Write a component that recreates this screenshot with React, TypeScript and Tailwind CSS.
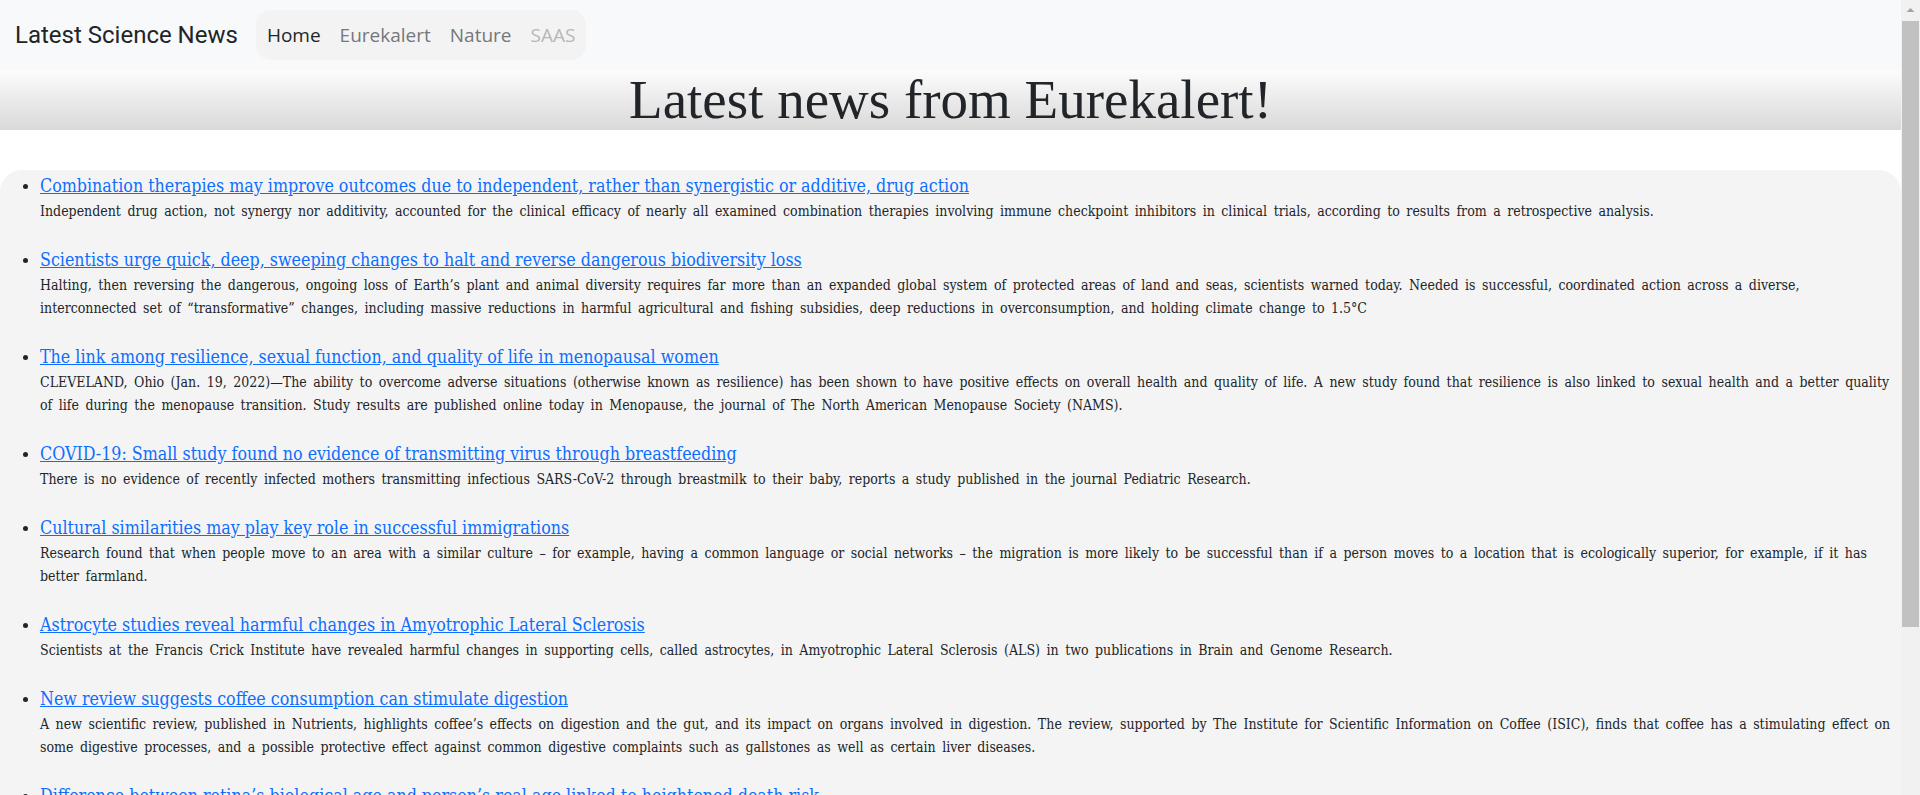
import React from 'react';

interface NewsItem {
    title: string;
    summary: string;
}

const news: NewsItem[] = [
    {
        title: 'Combination therapies may improve outcomes due to independent, rather than synergistic or additive, drug action',
        summary:
            'Independent drug action, not synergy nor additivity, accounted for the clinical efficacy of nearly all examined combination therapies involving immune checkpoint inhibitors in clinical trials, according to results from a retrospective analysis.',
    },
    {
        title: 'Scientists urge quick, deep, sweeping changes to halt and reverse dangerous biodiversity loss',
        summary:
            'Halting, then reversing the dangerous, ongoing loss of Earth’s plant and animal diversity requires far more than an expanded global system of protected areas of land and seas, scientists warned today. Needed is successful, coordinated action across a diverse, interconnected set of “transformative” changes, including massive reductions in harmful agricultural and fishing subsidies, deep reductions in overconsumption, and holding climate change to 1.5°C',
    },
    {
        title: 'The link among resilience, sexual function, and quality of life in menopausal women',
        summary:
            'CLEVELAND, Ohio (Jan. 19, 2022)—The ability to overcome adverse situations (otherwise known as resilience) has been shown to have positive effects on overall health and quality of life. A new study found that resilience is also linked to sexual health and a better quality of life during the menopause transition. Study results are published online today in Menopause, the journal of The North American Menopause Society (NAMS).',
    },
    {
        title: 'COVID-19: Small study found no evidence of transmitting virus through breastfeeding',
        summary:
            'There is no evidence of recently infected mothers transmitting infectious SARS-CoV-2 through breastmilk to their baby, reports a study published in the journal Pediatric Research.',
    },
    {
        title: 'Cultural similarities may play key role in successful immigrations',
        summary:
            'Research found that when people move to an area with a similar culture – for example, having a common language or social networks – the migration is more likely to be successful than if a person moves to a location that is ecologically superior, for example, if it has better farmland.',
    },
    {
        title: 'Astrocyte studies reveal harmful changes in Amyotrophic Lateral Sclerosis',
        summary:
            'Scientists at the Francis Crick Institute have revealed harmful changes in supporting cells, called astrocytes, in Amyotrophic Lateral Sclerosis (ALS) in two publications in Brain and Genome Research.',
    },
    {
        title: 'New review suggests coffee consumption can stimulate digestion',
        summary:
            'A new scientific review, published in Nutrients, highlights coffee’s effects on digestion and the gut, and its impact on organs involved in digestion. The review, supported by The Institute for Scientific Information on Coffee (ISIC), finds that coffee has a stimulating effect on some digestive processes, and a possible protective effect against common digestive complaints such as gallstones as well as certain liver diseases.',
    },
    {
        title: 'Difference between retina’s biological age and person’s real age linked to heightened death risk',
        summary:
            'The difference between the biological age of the retina and a person’s real age is linked to a heightened risk of death, finds research published online in the British Journal of Ophthalmology.',
    },
];

const navLinks = [
    { label: 'Home', className: 'text-[#212529]' },
    { label: 'Eurekalert', className: 'text-[#74787c]' },
    { label: 'Nature', className: 'text-[#74787c]' },
    { label: 'SAAS', className: 'text-[#b5b7b9]' },
];

export default function App() {
    return (
        <div className="flex h-screen overflow-hidden bg-white">
            <div className="flex-1 min-w-0 flex flex-col">
                {/* Navbar */}
                <nav className="flex items-center h-[70px] shrink-0 bg-[#f8f9fa] pl-[15px]">
                    <span className="font-['Roboto',sans-serif] text-[24px] text-[#212529] mr-[18px]">
                        Latest Science News
                    </span>
                    <div className="flex items-center gap-[19px] h-[50px] px-[11px] rounded-[15px] bg-[#f3f3f3] font-['Open_Sans',sans-serif] text-[19px]">
                        {navLinks.map((link) => (
                            <a key={link.label} href="#" className={link.className}>
                                {link.label}
                            </a>
                        ))}
                    </div>
                </nav>

                {/* Page header */}
                <header className="h-[60px] shrink-0 bg-gradient-to-b from-[#fcfcfc] to-[#d9d9d9] text-center">
                    <h1 className="font-['Liberation_Serif',serif] text-[55px] leading-[60px] text-[#212529]">
                        Latest news from Eurekalert!
                    </h1>
                </header>

                {/* News list */}
                <main className="mt-[40px] flex-1 rounded-t-[22px] bg-[#f4f4f4] pt-[3px] font-['DejaVu_Serif',serif] font-stretch-condensed">
                    <ul className="list-disc pl-[40px] marker:text-[#212529]">
                        {news.map((item) => (
                            <li key={item.title} className="mb-[24px]">
                                <a href="#" className="text-[#0d6efd] underline text-[17.7px] leading-[27px]">
                                    {item.title}
                                </a>
                                <p className="text-[#212529] text-[14px] leading-[23px] [word-spacing:2.5px]">
                                    {item.summary}
                                </p>
                            </li>
                        ))}
                    </ul>
                </main>
            </div>

            {/* Scrollbar */}
            <div className="w-[19px] shrink-0 flex flex-col items-center bg-[#f1f1f1]">
                <svg width="9" height="14" viewBox="0 0 9 14" className="mt-[3px]">
                    <path d="M0.5 9 L4.5 5 L8.5 9 Z" fill="#a3a3a3" />
                </svg>
                <div className="w-[17px] h-[606px] mt-[4px] bg-[#c1c1c1]" />
            </div>
        </div>
    );
}
